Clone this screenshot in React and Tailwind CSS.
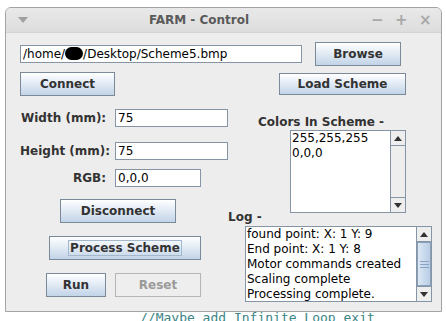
import React from "react";

function Btn({ children, className = "", focus = false, disabled = false }) {
    if (disabled) {
        return (
            <div className={`h-[24px] border border-[#b5b5b5] bg-[#eeeeee] flex items-center justify-center text-[12px] font-bold text-[#9a9a9a] ${className}`}>
                {children}
            </div>
        );
    }
    return (
        <div className={`h-[24px] border border-[#7a8a99] bg-linear-to-b from-white to-[#c2d4e8] flex items-center justify-center text-[12px] font-bold text-[#333333] ${className}`}>
            {focus ? (
                <span className="border border-[#a3b8cc] px-[1px] leading-[14px]">{children}</span>
            ) : (
                children
            )}
        </div>
    );
}

function Field({ children, className = "" }) {
    return (
        <div className={`h-[18px] bg-white border border-[#8595a5] px-[2px] text-[12px] leading-[16px] text-black whitespace-nowrap overflow-hidden ${className}`}>
            {children}
        </div>
    );
}

function Arrow({ up }) {
    return (
        <div className={`h-[15px] flex items-center justify-center bg-[#eeeeee] ${up ? "border-b" : "border-t"} border-[#8595a5]`}>
            <svg width="8" height="5" viewBox="0 0 8 5">
                {up ? <path d="M0 5 L4 0 L8 5 Z" fill="#333" /> : <path d="M0 0 L4 5 L8 0 Z" fill="#333" />}
            </svg>
        </div>
    );
}

function ListBox({ lines, className = "", thumb = false }) {
    return (
        <div className={`flex bg-white border border-[#8595a5] ${className}`}>
            <div className="flex-1 overflow-hidden text-[12px] leading-[15px] text-black pl-[1px] whitespace-nowrap">
                {lines.map((l) => (
                    <div key={l}>{l}</div>
                ))}
            </div>
            <div className="w-[15px] flex flex-col border-l border-[#8595a5] bg-[#eeeeee]">
                <Arrow up />
                <div className="flex-1 flex flex-col">
                    {thumb ? (
                        <div className="flex-1 border border-[#8aa0b8] bg-linear-to-r from-[#dce8f5] to-[#b8cde4] flex flex-col items-center justify-center gap-[2px]">
                            <div className="w-[9px] h-px bg-[#8aa3c4]"></div>
                            <div className="w-[9px] h-px bg-[#8aa3c4]"></div>
                            <div className="w-[9px] h-px bg-[#8aa3c4]"></div>
                        </div>
                    ) : (
                        <div className="flex-1 bg-[#eeeeee]"></div>
                    )}
                </div>
                <Arrow />
            </div>
        </div>
    );
}

export default function App() {
    return (
        <div className="w-[446px] h-[321px] bg-white overflow-hidden font-['DejaVu_Sans',sans-serif]">
            {/* Window */}
            <div className="ml-[5px] mt-[7px] w-[437px] h-[305px] border border-[#a3a3a3] rounded-t-[6px] bg-[#ededed] flex flex-col overflow-hidden">
                {/* Title bar */}
                <div className="h-[24px] bg-linear-to-b from-[#e9e9e9] to-[#dddddd] flex items-center text-[#8c8c8c] shrink-0">
                    <div className="w-[34px] pl-[12px]">
                        <svg width="10" height="6" viewBox="0 0 10 6">
                            <path d="M0 0 L10 0 L5 6 Z" fill="#a0a0a0" />
                        </svg>
                    </div>
                    <div className="flex-1 text-center text-[12px] font-bold text-[#5a5a5a] pr-[13px]">FARM - Control</div>
                    <div className="flex items-center gap-[13px] pr-[11px] text-[15px] font-bold text-[#a8a8a8]">
                        <span className="w-[11px] text-center">−</span>
                        <span className="w-[11px] text-center">+</span>
                        <span className="w-[11px] text-center">×</span>
                    </div>
                </div>

                {/* Content */}
                <div className="pt-[9px] border-t border-[#d2d2d2]">
                    <div className="flex items-center pl-[14px]">
                        <Field className="w-[282px]">
                            /home/<span className="inline-block w-[18px] h-[13px] rounded-full bg-black align-[-2px]"></span>/Desktop/Scheme5.bmp
                        </Field>
                        <Btn className="ml-[13px] w-[86px]">Browse</Btn>
                    </div>
                    <div className="flex items-start pl-[14px] mt-[6px]">
                        <Btn className="w-[95px]">Connect</Btn>
                        <Btn className="ml-[164px] mt-[1px] w-[127px] !h-[22px]">Load Scheme</Btn>
                    </div>

                    <div className="flex">
                        {/* Left column */}
                        <div className="w-[222px] shrink-0">
                            <div className="flex items-center mt-[13px]">
                                <div className="w-[109px] pl-[15px] text-[12px] font-bold text-[#333333]">Width (mm):</div>
                                <Field className="w-[113px]">75</Field>
                            </div>
                            <div className="flex items-center mt-[15px]">
                                <div className="w-[109px] pl-[14px] text-[12px] font-bold text-[#333333]">Height (mm):</div>
                                <Field className="w-[113px]">75</Field>
                            </div>
                            <div className="flex items-center mt-[9px]">
                                <div className="w-[109px] pr-[9px] text-right text-[12px] font-bold text-[#333333]">RGB:</div>
                                <Field className="w-[86px]">0,0,0</Field>
                            </div>
                            <Btn className="mt-[12px] ml-[54px] w-[116px]">Disconnect</Btn>
                            <Btn focus className="mt-[13px] ml-[43px] w-[152px]">Process Scheme</Btn>
                            <div className="flex mt-[13px] ml-[40px] gap-[9px]">
                                <Btn className="w-[60px]">Run</Btn>
                                <Btn disabled className="w-[86px]">Reset</Btn>
                            </div>
                        </div>

                        {/* Right column */}
                        <div className="flex-1">
                            <div className="mt-[19px] ml-[30px] text-[12px] leading-[15px] font-bold text-[#333333]">Colors In Scheme -</div>
                            <ListBox className="ml-[62px] w-[116px] h-[83px]" lines={["255,255,255", "0,0,0"]} />
                            <div className="-mt-[3px] text-[12px] leading-[15px] font-bold text-[#333333]">Log -</div>
                            <ListBox
                                thumb
                                className="mt-[1px] ml-[17px] w-[187px] h-[76px]"
                                lines={[
                                    "found point: X: 1 Y: 9",
                                    "End point: X: 1 Y: 8",
                                    "Motor commands created",
                                    "Scaling complete",
                                    "Processing complete.",
                                ]}
                            />
                        </div>
                    </div>
                </div>
            </div>

            {/* Editor text behind the window */}
            <div className="pl-[140px] text-[13px] leading-[12px] text-[#3b8585] font-['DejaVu_Sans_Mono',monospace] whitespace-pre">
                //Maybe add Infinite Loop exit
            </div>
        </div>
    );
}
